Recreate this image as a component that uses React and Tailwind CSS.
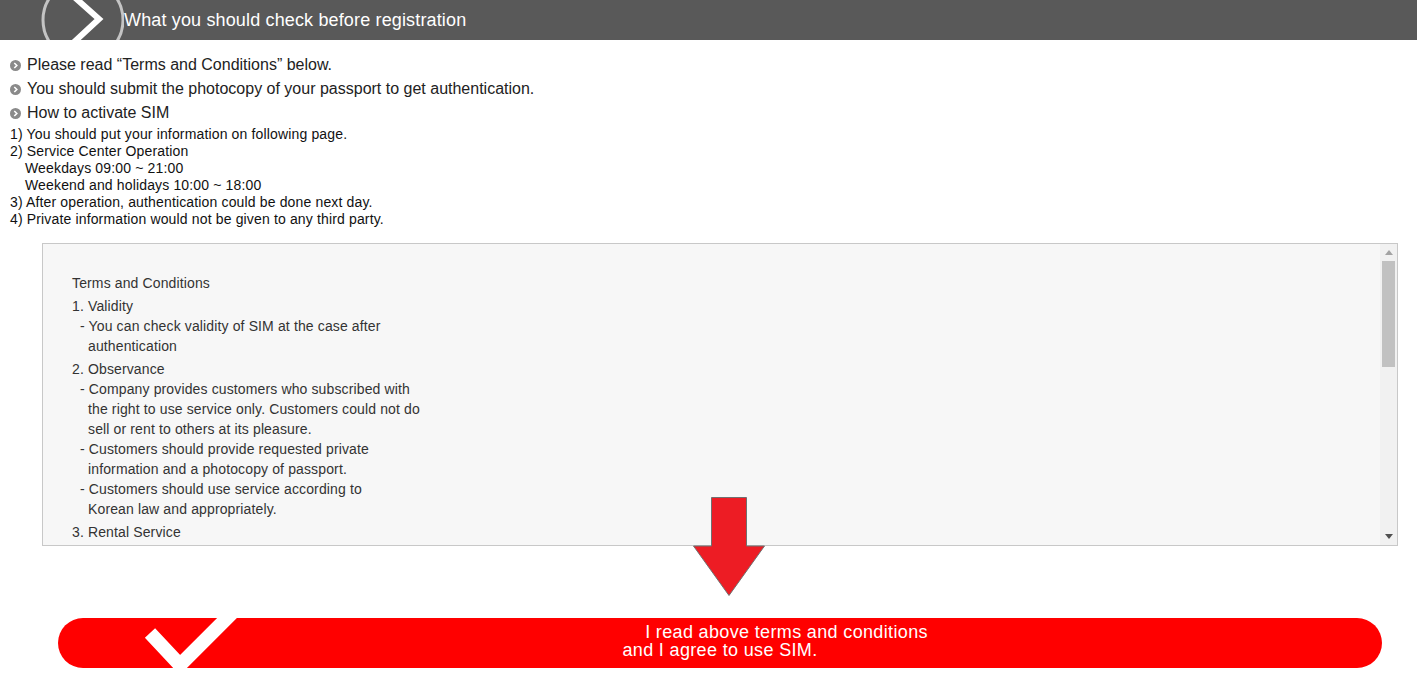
import React from "react";

const font = { fontFamily: '"Liberation Sans", Arial, sans-serif' };

function BulletIcon() {
  return (
    <svg width="11" height="11" viewBox="0 0 11 11" className="shrink-0">
      <circle cx="5.5" cy="5.5" r="5.5" fill="#8a8a8a" />
      <polyline points="4.3,3 6.8,5.5 4.3,8" fill="none" stroke="#fff" strokeWidth="1.6" />
    </svg>
  );
}

const terms = [
  {
    title: "1. Validity",
    items: [["- You can check validity of SIM at the case after", "authentication"]],
  },
  {
    title: "2. Observance",
    items: [
      [
        "- Company provides customers who subscribed with",
        "the right to use service only. Customers could not do",
        "sell or rent to others at its pleasure.",
      ],
      ["- Customers should provide requested private", "information and a photocopy of passport."],
      ["- Customers should use service according to", "Korean law and appropriately."],
    ],
  },
  {
    title: "3. Rental Service",
    items: [],
  },
];

function TermsBox() {
  return (
    <div className="mt-[15px] ml-[42px] mr-[19px] h-[303px] border border-[#c8c8c8] bg-[#f7f7f7] flex overflow-hidden">
      <div className="flex-1 overflow-hidden pl-[29px] pt-[29px] text-[14px] leading-[20px] tracking-[0.13px] text-[#333] whitespace-nowrap">
        <div>Terms and Conditions</div>
        {terms.map((sec) => (
          <div key={sec.title} className="mt-[3px]">
            <div>{sec.title}</div>
            {sec.items.map((lines, i) => (
              <div key={i} className="ml-2">
                {lines.map((l, j) => (
                  <div key={j} className={j > 0 ? "pl-2" : ""}>
                    {l}
                  </div>
                ))}
              </div>
            ))}
          </div>
        ))}
      </div>
      {/* scrollbar */}
      <div className="w-[17px] bg-[#f1f1f1] flex flex-col shrink-0">
        <div className="h-[17px] flex items-center justify-center">
          <svg width="8" height="5" viewBox="0 0 8 5">
            <polygon points="0,5 8,5 4,0" fill="#a3a3a3" />
          </svg>
        </div>
        <div className="mx-[2px] h-[106px] bg-[#c1c1c1]" />
        <div className="flex-1" />
        <div className="h-[17px] flex items-center justify-center">
          <svg width="8" height="5" viewBox="0 0 8 5">
            <polygon points="0,0 8,0 4,5" fill="#505050" />
          </svg>
        </div>
      </div>
    </div>
  );
}

export default function App() {
  return (
    <div className="relative w-[1417px] h-[684px] bg-white overflow-hidden" style={font}>
      {/* header */}
      <div className="h-10 bg-[#595959] flex items-center overflow-hidden">
        <svg width="124" height="40" viewBox="0 0 124 40" className="shrink-0">
          <circle cx="83" cy="20" r="40" fill="none" stroke="#c4c4c4" strokeWidth="3" />
          <polyline points="72,-5 99,19 72,44" fill="none" stroke="#fff" strokeWidth="6" />
        </svg>
        <h1 className="text-white text-[18px] tracking-[0.15px]">
          What you should check before registration
        </h1>
      </div>

      <div className="px-[10px] pt-[13px] text-[#222]">
        {[
          "Please read \u201cTerms and Conditions\u201d below.",
          "You should submit the photocopy of your passport to get authentication.",
          "How to activate SIM",
        ].map((t) => (
          <div key={t} className="h-6 flex items-center gap-[6px] text-[16px]">
            <BulletIcon />
            <span>{t}</span>
          </div>
        ))}
        <div className="mt-[1px] text-[14px] leading-[17px] tracking-[0.15px] text-[#111]">
          <div>1) You should put your information on following page.</div>
          <div>2) Service Center Operation</div>
          <div className="pl-[15px]">Weekdays 09:00 ~ 21:00</div>
          <div className="pl-[15px]">Weekend and holidays 10:00 ~ 18:00</div>
          <div>3) After operation, authentication could be done next day.</div>
          <div>4) Private information would not be given to any third party.</div>
        </div>
      </div>

      <TermsBox />

      {/* agree button */}
      <button className="relative mt-[72px] ml-[58px] w-[1324px] h-[50px] rounded-full bg-[#ff0000] overflow-hidden flex flex-col items-center pt-[5px] text-white text-[18px] leading-[18px] tracking-[0.35px]">
        <svg width="200" height="50" viewBox="0 0 200 50" className="absolute left-0 top-0">
          <polyline points="92,15 122,47 184,-15" fill="none" stroke="#fff" strokeWidth="14" />
        </svg>
        <span className="pl-[133px]">I read above terms and conditions</span>
        <span>and I agree to use SIM.</span>
      </button>

      {/* down arrow over the box */}
      <svg
        width="73"
        height="100"
        viewBox="0 0 73 100"
        className="absolute left-[693px] top-[497px]"
      >
        <polygon
          points="18.5,0.5 53.5,0.5 53.5,49 71.5,49 36,98.5 0.5,49 18.5,49"
          fill="#ed1c24"
          stroke="#707070"
          strokeWidth="1"
        />
      </svg>
    </div>
  );
}
